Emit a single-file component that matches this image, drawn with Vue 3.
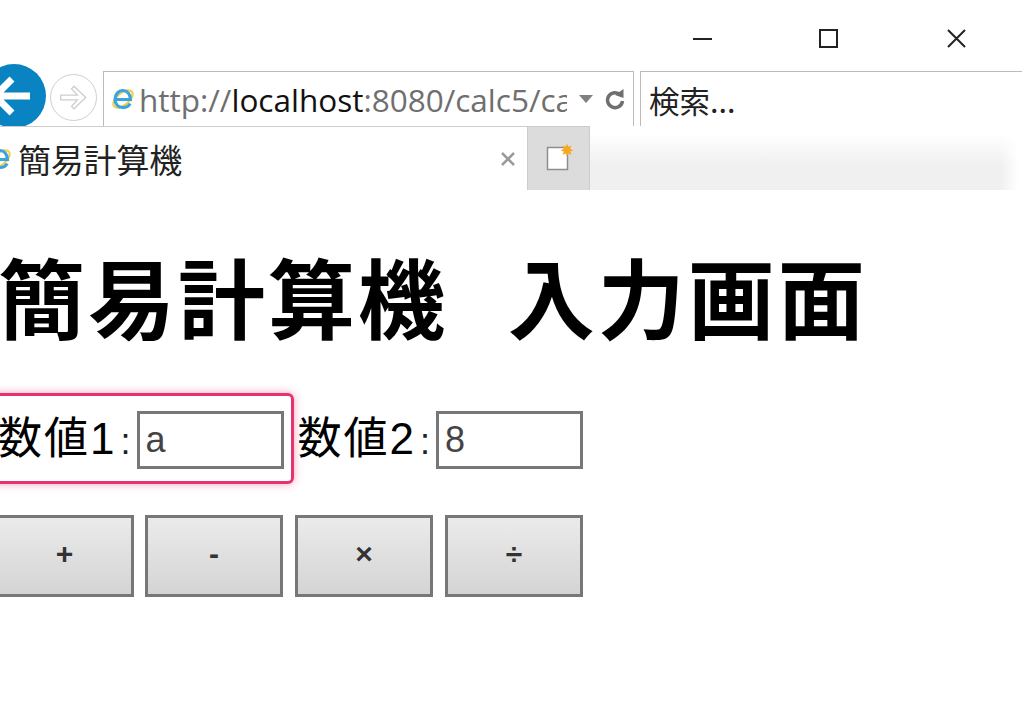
<template>
  <div class="window">
    <div class="titlebar">
      <svg class="win-icon minimize" viewBox="0 0 20 20"><path d="M0 10H19" /></svg>
      <svg class="win-icon" viewBox="0 0 20 20"><rect x="1" y="1" width="17" height="17" /></svg>
      <svg class="win-icon" viewBox="0 0 20 20"><path d="M1 1L18 18M18 1L1 18" /></svg>
    </div>

    <div class="navbar">
      <div class="back">
        <svg viewBox="0 0 64 64">
          <path d="M12 32H48M30 15L13 32L30 49" />
        </svg>
      </div>
      <div class="forward">
        <svg viewBox="0 0 46 46">
          <path d="M10 20.5H27L21 14L23.5 11.5L35.5 23L23.5 34.5L21 32L27 25.5H10Z" />
        </svg>
      </div>
      <div class="address">
        <svg class="ie-icon" viewBox="0 0 24 24">
          <ellipse cx="12" cy="12" rx="11.5" ry="6" transform="rotate(-40 12 12)" class="ie-orbit" />
          <path d="M4.5 12.5H19.5C19.5 7 16 3.5 12 3.5C7.5 3.5 4 7.5 4 12.5C4 17.5 7.5 20.5 12 20.5C15.5 20.5 18 19 19 16.5" class="ie-e" />
        </svg>
        <span class="url"><span class="dim">http://</span>localhost<span class="dim">:8080/calc5/ca</span></span>
        <svg class="caret" viewBox="0 0 14 8"><path d="M0 0H14L7 8Z" /></svg>
        <svg class="refresh" viewBox="0 0 20 24">
          <path d="M15.5 8A7.5 7.5 0 1 0 17.5 14" />
          <path class="refresh-tip" d="M10 8L18.5 2V11Z" />
        </svg>
      </div>
      <div class="search">検索...</div>
    </div>

    <div class="tabbar">
      <div class="tab">
        <svg class="ie-icon tab-icon" viewBox="0 0 24 24">
          <ellipse cx="12" cy="12" rx="11.5" ry="6" transform="rotate(-40 12 12)" class="ie-orbit" />
          <path d="M4.5 12.5H19.5C19.5 7 16 3.5 12 3.5C7.5 3.5 4 7.5 4 12.5C4 17.5 7.5 20.5 12 20.5C15.5 20.5 18 19 19 16.5" class="ie-e" />
        </svg>
        <span class="tab-title">簡易計算機</span>
        <svg class="tab-close" viewBox="0 0 14 14"><path d="M1 1L13 13M13 1L1 13" /></svg>
      </div>
      <div class="new-tab">
        <svg viewBox="0 0 28 30">
          <rect x="2.5" y="3.5" width="20" height="22" class="sheet" />
          <path class="spark" transform="translate(5.2 -0.4) scale(0.8)" d="M21 0L22.6 4L26.6 2.6L25 6.5L29 8.5L25 10L26.6 14L22.6 12.5L21 16L19.4 12.5L15.4 14L17 10L13 8.5L17 6.5L15.4 2.6L19.4 4Z" />
        </svg>
      </div>
      <div class="tab-rest"></div>
    </div>

    <main class="content">
      <h1>簡易計算機 入力画面</h1>
      <div class="inputs">
        <label v-for="field in fields" :key="field.label" class="field" :class="{ invalid: field.invalid }">
          <span class="field-label">{{ field.label }}<span class="colon">:</span></span>
          <input type="text" :value="field.value" />
        </label>
      </div>
      <div class="buttons">
        <button v-for="op in ops" :key="op" type="button">{{ op }}</button>
      </div>
    </main>
  </div>
</template>

<script setup>
const fields = [
  { label: "数値1", value: "a", invalid: true },
  { label: "数値2", value: "8", invalid: false },
];

const ops = ["+", "-", "×", "÷"];
</script>

<style>
html,
body {
  margin: 0;
  background: #fff;
}
</style>

<style scoped>
.window {
  width: 1024px;
  height: 722px;
  overflow: hidden;
  background: #fff;
  font-family: "Liberation Sans", "Noto Sans CJK JP", sans-serif;
  color: #000;
}

.titlebar {
  height: 60px;
  display: flex;
  justify-content: flex-end;
  gap: 108px;
  padding: 29px 57px 0 0;
  box-sizing: border-box;
}

.minimize {
  margin-right: -2px;
}

.win-icon {
  width: 20px;
  height: 20px;
  fill: none;
  stroke: #222;
  stroke-width: 2;
}

.navbar {
  height: 66px;
  display: flex;
  overflow: hidden;
}

.back {
  flex: none;
  width: 64px;
  height: 64px;
  margin: 4px 0 0 -18px;
  border-radius: 50%;
  background: #0a83c2;
}

.back svg {
  width: 64px;
  height: 64px;
  fill: none;
  stroke: #fff;
  stroke-width: 7;
}

.forward {
  flex: none;
  width: 45px;
  height: 45px;
  margin: 14px 0 0 4px;
  border: 1px solid #cfcfcf;
  border-radius: 50%;
}

.forward svg {
  width: 45px;
  height: 45px;
  fill: #fff;
  stroke: #cdcdcd;
  stroke-width: 1.3;
}

.address {
  flex: none;
  width: 531px;
  height: 55px;
  margin: 11px 0 0 6px;
  border: 1px solid #bbb;
  border-bottom: 0;
  box-sizing: border-box;
  display: flex;
  align-items: center;
  padding-left: 7px;
}

.ie-icon {
  flex: none;
  width: 24px;
  height: 24px;
}

.ie-orbit {
  fill: none;
  stroke: #f0cf50;
  stroke-width: 2.2;
}

.ie-e {
  fill: none;
  stroke: #3ba4dc;
  stroke-width: 3.2;
}

.url {
  flex: none;
  width: 428px;
  margin-left: 4px;
  overflow: hidden;
  white-space: nowrap;
  font-family: "Open Sans", sans-serif;
  font-size: 31.5px;
  line-height: 55px;
  color: #111;
}

.dim {
  color: #6f6f6f;
}

.caret {
  flex: none;
  width: 14px;
  height: 8px;
  margin-left: 12px;
  fill: #808080;
}

.refresh {
  flex: none;
  width: 20px;
  height: 24px;
  margin-left: 12px;
  fill: none;
  stroke: #6f6f6f;
  stroke-width: 3.5;
}

.refresh-tip {
  fill: #6f6f6f;
  stroke: none;
}

.search {
  flex: 1;
  height: 55px;
  margin: 11px 2px 0 6px;
  padding-left: 8px;
  border: 1px solid #bbb;
  border-width: 1px 0 0 1px;
  box-sizing: border-box;
  font-family: "Noto Sans CJK JP", sans-serif;
  font-size: 30.5px;
  line-height: 56px;
  color: #222;
}

.tabbar {
  height: 64px;
  display: flex;
}

.tab {
  flex: none;
  width: 527px;
  height: 64px;
  border-top: 1px solid #ccc;
  box-sizing: border-box;
  display: flex;
  align-items: center;
}

.tab-icon {
  margin-left: -12px;
}

.tab-title {
  flex: 1;
  margin-left: 6px;
  font-family: "Noto Sans CJK JP", sans-serif;
  font-size: 33px;
  letter-spacing: -0.2px;
  color: #222;
}

.tab-close {
  flex: none;
  width: 14px;
  height: 14px;
  margin-right: 12px;
  fill: none;
  stroke: #9a9a9a;
  stroke-width: 2.5;
}

.new-tab {
  flex: none;
  width: 63px;
  height: 64px;
  background: #dcdcdc;
  border: 1px solid #cccccc;
  border-bottom: 0;
  box-sizing: border-box;
  display: flex;
  align-items: center;
  justify-content: center;
}

.new-tab svg {
  width: 28px;
  height: 30px;
  overflow: visible;
}

.sheet {
  fill: #fff;
  stroke: #8e8e8e;
  stroke-width: 1.5;
}

.spark {
  fill: #f5a820;
}

.tab-rest {
  flex: 1;
  margin: 8px 6px 0 0;
  background:
    linear-gradient(to right, transparent 96%, #fff),
    linear-gradient(to bottom, #fff, #f0f0f0 55%, #f0f0f0);
}

.content {
  padding-top: 45px;
}

h1 {
  margin: 0 0 0 -2px;
  font-family: "Noto Sans CJK JP", sans-serif;
  font-size: 87px;
  font-weight: 700;
  line-height: 120px;
  letter-spacing: 3px;
  word-spacing: 37px;
  white-space: nowrap;
}

.inputs {
  display: flex;
  gap: 3px;
  margin: 38px 0 0 -10px;
  align-items: flex-start;
}

.field {
  display: flex;
  align-items: center;
  padding: 18px 10px 15px 8px;
}

.field + .field {
  padding-left: 1px;
}

.field.invalid {
  padding: 15px 7px 12px 5px;
  border: 3px solid #e5336f;
  border-radius: 6px;
  box-shadow: 0 0 8px rgba(229, 51, 111, 0.45);
}

.field-label {
  height: 58px;
  font-size: 44px;
  line-height: 56px;
  letter-spacing: 2px;
  white-space: nowrap;
}

.colon {
  margin: 0 6px 0 4px;
  font-size: 36px;
  color: #222;
  letter-spacing: 0;
}

input {
  width: 147px;
  height: 58px;
  box-sizing: border-box;
  border: 3px solid #777;
  border-radius: 0;
  padding: 0 6px;
  outline: none;
  font-family: "Liberation Sans", sans-serif;
  font-size: 36px;
  color: #444;
  background: #fff;
}

.buttons {
  display: flex;
  gap: 12px;
  margin: 31px 0 0 -5px;
}

button {
  width: 138px;
  height: 82px;
  box-sizing: border-box;
  border: 3px solid #777;
  background: linear-gradient(to bottom, #ebebeb, #d4d4d4);
  font-family: "Liberation Sans", sans-serif;
  font-size: 30px;
  font-weight: 700;
  color: #333;
  padding: 0 0 4px;
}

button:first-child {
  width: 139px;
  margin-right: -1px;
}
</style>
